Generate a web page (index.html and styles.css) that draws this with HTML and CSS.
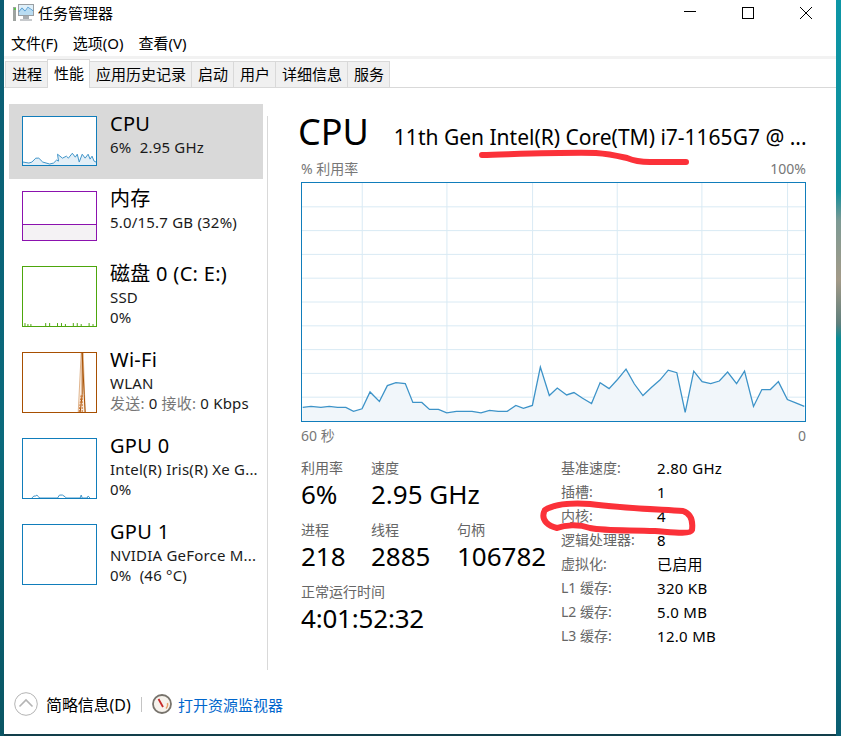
FILE: index.html
```html
<!DOCTYPE html>
<html lang="zh">
<head>
    <meta charset="UTF-8">
    <title>任务管理器</title>
    <link rel="stylesheet" href="styles.css">
</head>
<body>
    <div class="window">
        <div class="titlebar">
            <svg class="app-icon" width="22" height="20" viewBox="0 0 22 20">
                <rect x="5.5" y="1.5" width="15" height="11" fill="#dff0fa" stroke="#9a9fa3"/>
                <polyline points="6,9 9,5.5 12,8.5 15,4.5 20,8" fill="none" stroke="#3f8ecb" stroke-width="1.2"/>
                <polygon points="6,9 9,5.5 12,8.5 15,4.5 20,8 20,12 6,12" fill="#b9dcf2"/>
                <rect x="10" y="13" width="6" height="3" fill="#a8adb1"/>
                <rect x="7" y="16" width="12" height="2" fill="#c6c9cc"/>
                <rect x="0" y="4" width="3" height="14" fill="#9ea3a0"/>
                <rect x="1" y="5" width="2" height="2" fill="#5cc24a"/>
            </svg>
            <span class="app-title">任务管理器</span>
            <div class="win-buttons">
                <svg width="14" height="14" viewBox="0 0 14 14"><line x1="1" y1="5.5" x2="13" y2="5.5" stroke="#000"/></svg>
                <svg width="14" height="14" viewBox="0 0 14 14"><rect x="1.5" y="1.5" width="11" height="11" fill="none" stroke="#000"/></svg>
                <svg width="14" height="14" viewBox="0 0 14 14"><path d="M1 1L13 13M13 1L1 13" stroke="#000" fill="none"/></svg>
            </div>
        </div>

        <div class="menubar">
            <span>文件(F)</span>
            <span>选项(O)</span>
            <span>查看(V)</span>
        </div>

        <div class="tabs">
            <div class="tab">进程</div>
            <div class="tab active">性能</div>
            <div class="tab">应用历史记录</div>
            <div class="tab">启动</div>
            <div class="tab">用户</div>
            <div class="tab">详细信息</div>
            <div class="tab">服务</div>
        </div>

        <div class="content">
            <div class="sidebar">
                <div class="item selected">
                    <svg class="thumb thumb-cpu" viewBox="0 0 74 49" preserveAspectRatio="none">
                        <polyline class="fill" points="0,49 0,46 6,47 9,46 13,42 16,42 20,46 27,48 31,47 34,44 36,45 35,38 40,42 44,40 46,42 50,37 53,41 55,38 57,46 60,38 63,42 66,38 68,43 70,40 72,45 74,46 74,49"/>
                        <polyline class="line" points="0,46 6,47 9,46 13,42 16,42 20,46 27,48 31,47 34,44 36,45 35,38 40,42 44,40 46,42 50,37 53,41 55,38 57,46 60,38 63,42 66,38 68,43 70,40 72,45 74,46"/>
                    </svg>
                    <div class="info">
                        <div class="name">CPU</div>
                        <div class="sub">6%&nbsp; 2.95 GHz</div>
                    </div>
                </div>
                <div class="item">
                    <div class="thumb thumb-mem"><div class="mem-used"></div></div>
                    <div class="info">
                        <div class="name">内存</div>
                        <div class="sub">5.0/15.7 GB (32%)</div>
                    </div>
                </div>
                <div class="item">
                    <svg class="thumb thumb-disk tall" viewBox="0 0 74 60" preserveAspectRatio="none">
                        <path d="M2 60V57M5 60V58M8 60V58M23 60V57M27 60V57M35 60V57M39 60V57M43 60V58M51 60V57M55 60V57M59 60V58M67 60V57M71 60V58" stroke="#4da60c" fill="none"/>
                    </svg>
                    <div class="info">
                        <div class="name">磁盘 0 (C: E:)</div>
                        <div class="sub">SSD</div>
                        <div class="sub">0%</div>
                    </div>
                </div>
                <div class="item">
                    <svg class="thumb thumb-wifi tall" viewBox="0 0 74 60" preserveAspectRatio="none">
                        <polyline points="56,60 59,0 61,0 63,60" fill="#fbeee2" stroke="#e0b48c"/>
                        <polyline points="58,60 60,42 60,0 62,42 63,60" fill="none" stroke="#a74f01"/>
                        <path d="M57 60L59 42M60 60V42" stroke="#c9702a" stroke-dasharray="2 1" fill="none"/>
                    </svg>
                    <div class="info">
                        <div class="name">Wi-Fi</div>
                        <div class="sub">WLAN</div>
                        <div class="sub"><span class="muted">发送:</span> 0 <span class="muted">接收:</span> 0 Kbps</div>
                    </div>
                </div>
                <div class="item">
                    <svg class="thumb thumb-cpu tall" viewBox="0 0 74 60" preserveAspectRatio="none">
                        <polyline class="line" points="9,60 11,58 13,58 14,57 16,59 17,60 35,60 37,57 40,57 43,59 44,60 58,60 59,57 60,60 65,60 66,58 68,60"/>
                    </svg>
                    <div class="info">
                        <div class="name">GPU 0</div>
                        <div class="sub">Intel(R) Iris(R) Xe G...</div>
                        <div class="sub">0%</div>
                    </div>
                </div>
                <div class="item">
                    <div class="thumb thumb-blue tall"></div>
                    <div class="info">
                        <div class="name">GPU 1</div>
                        <div class="sub">NVIDIA GeForce M...</div>
                        <div class="sub">0%&nbsp; (46 °C)</div>
                    </div>
                </div>
            </div>

            <div class="main">
                <div class="heading">
                    <span class="heading-title">CPU</span>
                    <span class="heading-model">11th Gen Intel(R) Core(TM) i7-1165G7 @ ...</span>
                </div>
                <div class="axis axis-top">
                    <span>% 利用率</span>
                    <span>100%</span>
                </div>
                <svg class="graph" viewBox="301 183 505 240" preserveAspectRatio="none">
                    <path class="grid" d="M301 207H806M301 231H806M301 255H806M301 279H806M301 303H806M301 327H806M301 351H806M301 375H806M301 399H806M361.5 183V423M446.5 183V423M532.5 183V423M617.5 183V423M702.5 183V423M788.5 183V423"/>
                    <polygon class="area" points="301,423 301.7,409.3 310,408.3 320,409.3 328.3,408.3 336.7,409.3 345,409.3 352.7,413.3 361.3,410.7 369.3,393.7 378.7,403.3 386.7,387.3 395.3,384.3 404.7,385.3 412.3,404.3 421.3,404.3 429,411.3 438,411.3 446.3,414.7 456,413.3 463.3,413.3 471.7,413.3 480.7,414.7 489.3,412.3 498,413.3 507,413.3 515.7,407.3 523.3,410.3 532.3,407.3 540.3,368.7 549.3,397.3 557.3,389.7 566.7,396.7 574,394.3 582.7,400 591.7,405.3 600.3,384.3 609.3,390.3 617.3,381.7 626.3,370.7 634.7,385.7 643.3,397.3 651.7,389.3 660.3,381.7 668.7,371.7 677.3,374.3 685.7,414.3 694.3,372.7 702.7,383.3 711.3,385.3 720,382.7 728.3,373.7 737.3,385.3 745.3,372.7 754.3,408.3 762.7,391.3 771.3,391.3 779.3,383.3 788.3,401.3 796.7,404.7 805.3,408.3 806,423"/>
                    <polyline class="trace" points="301.7,409.3 310,408.3 320,409.3 328.3,408.3 336.7,409.3 345,409.3 352.7,413.3 361.3,410.7 369.3,393.7 378.7,403.3 386.7,387.3 395.3,384.3 404.7,385.3 412.3,404.3 421.3,404.3 429,411.3 438,411.3 446.3,414.7 456,413.3 463.3,413.3 471.7,413.3 480.7,414.7 489.3,412.3 498,413.3 507,413.3 515.7,407.3 523.3,410.3 532.3,407.3 540.3,368.7 549.3,397.3 557.3,389.7 566.7,396.7 574,394.3 582.7,400 591.7,405.3 600.3,384.3 609.3,390.3 617.3,381.7 626.3,370.7 634.7,385.7 643.3,397.3 651.7,389.3 660.3,381.7 668.7,371.7 677.3,374.3 685.7,414.3 694.3,372.7 702.7,383.3 711.3,385.3 720,382.7 728.3,373.7 737.3,385.3 745.3,372.7 754.3,408.3 762.7,391.3 771.3,391.3 779.3,383.3 788.3,401.3 796.7,404.7 805.3,408.3"/>
                </svg>
                <div class="axis axis-bottom">
                    <span>60 秒</span>
                    <span>0</span>
                </div>

                <div class="stats">
                    <div class="stats-left">
                        <div class="stat-row">
                            <div class="stat stat-a"><div class="stat-label">利用率</div><div class="stat-value">6%</div></div>
                            <div class="stat"><div class="stat-label">速度</div><div class="stat-value">2.95 GHz</div></div>
                        </div>
                        <div class="stat-row">
                            <div class="stat stat-a"><div class="stat-label">进程</div><div class="stat-value">218</div></div>
                            <div class="stat stat-b"><div class="stat-label">线程</div><div class="stat-value">2885</div></div>
                            <div class="stat"><div class="stat-label">句柄</div><div class="stat-value">106782</div></div>
                        </div>
                        <div class="stat-row">
                            <div class="stat"><div class="stat-label">正常运行时间</div><div class="stat-value uptime">4:01:52:32</div></div>
                        </div>
                    </div>
                    <div class="specs">
                        <span class="spec-label">基准速度:</span><span>2.80 GHz</span>
                        <span class="spec-label">插槽:</span><span>1</span>
                        <span class="spec-label">内核:</span><span>4</span>
                        <span class="spec-label">逻辑处理器:</span><span>8</span>
                        <span class="spec-label">虚拟化:</span><span>已启用</span>
                        <span class="spec-label">L1 缓存:</span><span>320 KB</span>
                        <span class="spec-label">L2 缓存:</span><span>5.0 MB</span>
                        <span class="spec-label">L3 缓存:</span><span>12.0 MB</span>
                    </div>
                </div>
            </div>
        </div>

        <div class="footer">
            <svg width="24" height="24" viewBox="0 0 24 24">
                <circle cx="12" cy="12" r="11.3" fill="none" stroke="#b4b4b4"/>
                <polyline points="5.5,14.5 12,8 18.5,14.5" fill="none" stroke="#b4b4b4" stroke-width="1.6"/>
            </svg>
            <span class="fewer">简略信息(D)</span>
            <span class="footer-sep"></span>
            <svg width="20" height="20" viewBox="0 0 20 20">
                <circle cx="10" cy="10" r="9" fill="#f6f2ec" stroke="#77736c" stroke-width="1.8"/>
                <path d="M14 14.5A6 6 0 0 0 15.5 9" fill="none" stroke="#e8a06a" stroke-width="1.4"/>
                <line x1="6.5" y1="5" x2="11" y2="13" stroke="#c62828" stroke-width="1.8"/>
            </svg>
            <span class="monitor-link">打开资源监视器</span>
        </div>
    </div>

    <svg class="marks" width="841" height="736" viewBox="0 0 841 736">
        <path d="M482 155C520 154 570 152 596 153C610 154 618 156 627 158C634 161 642 162 650 162L686 162"/>
        <path d="M545 510C556 503 575 503 590 504C620 508 650 509 683 511C692 514 693 522 692 530C690 535 670 532 655 531C625 530 605 531 590 528C578 524 565 525 557 528C549 526 541 521 544 512"/>
    </svg>
</body>
</html>
```

FILE: styles.css
```css
html, body {
    margin: 0;
    padding: 0;
}
body {
    position: relative;
    width: 841px;
    height: 736px;
    overflow: hidden;
    background:
        linear-gradient(180deg, #0a5c72 0%, #0b6a7c 60%, #0a5563 100%) left top / 4px 100% no-repeat,
        linear-gradient(180deg, #0d96a6 0%, #0f8f9c 26%, #7d9a94 30%, #a39a88 38%, #5f7f7c 44%, #0b8d96 46%, #0b8390 75%, #0a5c70 100%) right top / 5px 100% no-repeat,
        #123f4b;
    font-family: "Noto Sans", "Noto Sans CJK SC", sans-serif;
    color: #000;
}
.window {
    width: 832px;
    height: 734px;
    margin-left: 4px;
    background: #fff;
    display: flex;
    flex-direction: column;
}

/* title and menu */
.titlebar {
    height: 26px;
    padding: 0 0 4px 9px;
    display: flex;
    align-items: center;
}
.app-title {
    margin: -2px 0 0 3px;
    font-size: 15px;
}
.win-buttons {
    margin-left: auto;
    display: flex;
    gap: 44px;
    padding-right: 23px;
}
.menubar {
    height: 24px;
    padding: 0 0 2px 7px;
    display: flex;
    align-items: center;
    gap: 15px;
    font-size: 15px;
    border-bottom: 3px solid #f2f2f2;
}

/* tabs */
.tabs {
    height: 28px;
    display: flex;
    align-items: flex-end;
    padding-left: 1px;
    border-bottom: 1px solid #d9d9d9;
}
.tab {
    height: 25px;
    line-height: 25px;
    padding: 0 5px 0 6px;
    font-size: 15px;
    background: #f0f0f0;
    border: 1px solid #d9d9d9;
    border-bottom: 0;
    margin-right: -1px;
}
.tab.active {
    position: relative;
    height: 28px;
    line-height: 26px;
    padding: 0 5px 0 6px;
    background: #fff;
    margin-bottom: -1px;
}

/* left column */
.content {
    flex: 1;
    display: flex;
    min-height: 0;
}
.sidebar {
    width: 263px;
    padding: 16px 0 0 5px;
    box-sizing: border-box;
}
.item {
    width: 254px;
    box-sizing: border-box;
    padding: 12px 0 13px 13px;
    display: flex;
    gap: 13px;
}
.item.selected {
    background: #d9d9d9;
}
.thumb {
    display: block;
    flex: none;
    width: 75px;
    height: 50px;
    box-sizing: border-box;
    background: #fff;
    border: 1px solid #117dbb;
}
.thumb.tall {
    height: 61px;
}
.thumb .fill {
    fill: #e3eff7;
}
.thumb .line {
    fill: none;
    stroke: #3d93c8;
    stroke-width: 1;
}
.thumb-mem {
    border-color: #8b12ae;
    display: flex;
    flex-direction: column;
    justify-content: flex-end;
}
.mem-used {
    height: 15px;
    background: #f4f2f4;
    border-top: 1px solid #8b12ae;
}
.thumb-disk {
    border-color: #4da60c;
}
.thumb-wifi {
    border-color: #a74f01;
}
.thumb-blue {
    border-color: #117dbb;
}
.info {
    min-width: 0;
    margin-top: -5px;
    white-space: nowrap;
}
.name {
    font-size: 20px;
    line-height: 26px;
    letter-spacing: 0.3px;
}
.sub {
    font-size: 15px;
    line-height: 20px;
    letter-spacing: 0.2px;
    color: #1a1a1a;
}
.muted {
    color: #777;
}

/* right column */
.main {
    width: 539px;
    margin-top: 28px;
    height: 554px;
    border-left: 1px solid #d9d9d9;
    padding-left: 33px;
    box-sizing: border-box;
}
.heading {
    display: flex;
    align-items: baseline;
    height: 45px;
    margin-top: -7px;
    margin-left: -3px;
    white-space: nowrap;
}
.heading-title {
    font-size: 36px;
    line-height: 45px;
}
.heading-model {
    margin-left: 25px;
    font-size: 21px;
}
.axis {
    display: flex;
    justify-content: space-between;
    width: 505px;
    font-size: 14px;
    line-height: 18px;
    color: #777;
}
.axis-top {
    margin-top: 6px;
    margin-bottom: 4px;
}
.axis-bottom {
    margin-top: 5px;
}
.graph {
    display: block;
    width: 505px;
    height: 240px;
    box-sizing: border-box;
    border: 1px solid #117dbb;
}
.grid {
    stroke: #d9eaf4;
    fill: none;
}
.area {
    fill: #f1f6fa;
}
.trace {
    fill: none;
    stroke: #3d93c8;
    stroke-width: 1.3;
}

/* stats */
.stats {
    display: flex;
    margin-top: 14px;
}
.stats-left {
    width: 260px;
    flex: none;
}
.stat-row {
    display: flex;
    height: 62px;
}
.stat-a {
    width: 70px;
}
.stat-b {
    width: 86px;
}
.stat-label {
    font-size: 14px;
    line-height: 18px;
    color: #666;
}
.stat-value {
    font-size: 26px;
    line-height: 34px;
}
.uptime {
    letter-spacing: -0.2px;
}
.specs {
    display: grid;
    grid-template-columns: 96px auto;
    grid-auto-rows: 24px;
    font-size: 15px;
    line-height: 18px;
    letter-spacing: 0.3px;
    justify-content: start;
}
.spec-label {
    font-size: 14px;
    letter-spacing: 0;
    color: #666;
}

/* footer */
.footer {
    height: 64px;
    padding: 4px 0 0 10px;
    box-sizing: border-box;
    display: flex;
    align-items: center;
    font-size: 15px;
}
.fewer {
    margin-left: 8px;
    width: 84px;
    font-size: 16px;
    letter-spacing: -0.1px;
    white-space: nowrap;
}
.footer-sep {
    width: 1px;
    height: 15px;
    background: #c4c4c4;
    margin: 0 10px 0 11px;
}
.monitor-link {
    margin-left: 6px;
    color: #0066cc;
}

/* red pen marks on top of the screenshot */
.marks {
    position: absolute;
    left: 0;
    top: 0;
    pointer-events: none;
}
.marks path {
    fill: none;
    stroke: #fb3139;
    stroke-width: 6;
    stroke-linecap: round;
    stroke-linejoin: round;
}
```
